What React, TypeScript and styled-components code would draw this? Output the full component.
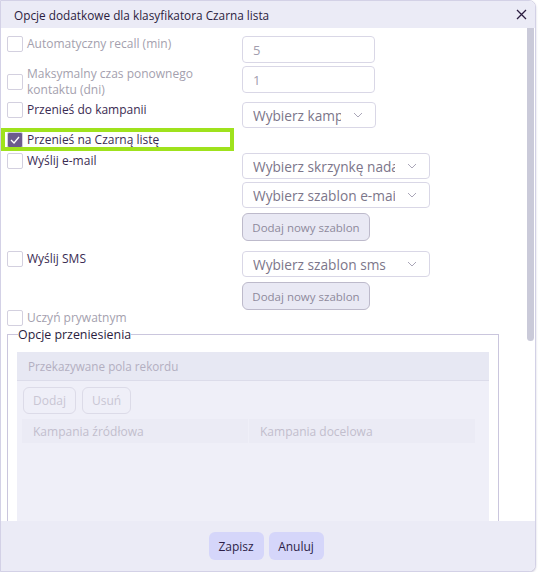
import styled, { createGlobalStyle } from "styled-components";

const GlobalStyle = createGlobalStyle`
  html, body {
    margin: 0;
    padding: 0;
    background: #ffffff;
  }
  body {
    font-family: "Open Sans", "DejaVu Sans", sans-serif;
  }
  * {
    box-sizing: border-box;
  }
`;

const DialogDIV = styled.div`
  width: 536px;
  height: 572px;
  display: flex;
  flex-direction: column;
  background: #ffffff;
  border: 1px solid #d3d1e6;
  border-radius: 0 7px 7px 0;
  overflow: hidden;
  box-shadow: 0 1px 2px rgba(60, 50, 110, 0.25);
`;

const HeaderDIV = styled.div`
  height: 27px;
  flex: none;
  display: flex;
  align-items: center;
  justify-content: space-between;
  padding: 0 7px 0 13px;
  background: #ebebf6;
  color: #2b1d40;
  font-size: 11.8px;
`;

const CloseBTN = styled.button`
  border: 0;
  background: transparent;
  padding: 0;
  width: 14px;
  height: 14px;
  display: flex;
  align-items: center;
  justify-content: center;
  cursor: pointer;
`;

const BodyWrapDIV = styled.div`
  flex: 1;
  min-height: 0;
  display: flex;
`;

const BodyDIV = styled.div`
  flex: 1;
  overflow: hidden;
  padding: 8px 0 0 6px;
`;

const ScrollTrackDIV = styled.div`
  width: 8px;
  flex: none;
  background: #ffffff;
`;

const ScrollThumbDIV = styled.div`
  width: 7px;
  height: 313px;
  background: #cacad9;
  border-radius: 0 0 4px 4px;
`;

const RowDIV = styled.div<{ $top: number }>`
  display: grid;
  grid-template-columns: 227px auto;
  column-gap: 8px;
  align-items: start;
  margin-top: ${(p) => p.$top}px;
`;

const LabelLABEL = styled.label<{ $highlight?: boolean; $center?: boolean }>`
  display: flex;
  align-items: ${(p) => (p.$center ? "center" : "flex-start")};
  gap: 4px;
  ${(p) =>
    p.$highlight &&
    `
    height: 15px;
    align-items: center;
    outline: 4px solid #9fe21d;
    margin-left: -2px;
    padding-left: 2px;
    width: 225px;
  `}
`;

const BoxSPAN = styled.span<{ $checked?: boolean }>`
  flex: none;
  width: 16px;
  height: 16px;
  border: 1px solid #d3d0df;
  border-radius: 2px;
  background: ${(p) => (p.$checked ? "#6c5b8d" : "#ffffff")};
  display: flex;
  align-items: center;
  justify-content: center;
`;

const LabelTextSPAN = styled.span<{ $disabled?: boolean }>`
  font-size: 12px;
  line-height: 16px;
  color: ${(p) => (p.$disabled ? "#a49fae" : "#3a2b52")};
`;

const ControlsDIV = styled.div`
  display: flex;
  flex-direction: column;
  align-items: flex-start;
  gap: 3px;
`;

const InputBOX = styled.div<{ $w: number }>`
  width: ${(p) => p.$w}px;
  height: 27px;
  border: 1px solid #d9d7e6;
  border-radius: 4px;
  padding: 0 10px;
  display: flex;
  align-items: center;
  font-size: 13px;
  color: #a29dae;
`;

const SelectBOX = styled.div<{ $w: number }>`
  width: ${(p) => p.$w}px;
  height: 26px;
  border: 1px solid #d9d7e6;
  border-radius: 4px;
  padding: 0 12px 0 10px;
  display: flex;
  align-items: center;
  justify-content: space-between;
  gap: 12px;
  font-size: 13.7px;
  color: #7c768a;
`;

const SelectTextSPAN = styled.span`
  overflow: hidden;
  white-space: nowrap;
  flex: 1;
`;

const GhostBTN = styled.button`
  width: 128px;
  height: 28px;
  padding: 0;
  margin-top: 2px;
  border: 1px solid #bdbacb;
  border-radius: 6px;
  background: #e9e9f4;
  font-family: inherit;
  font-size: 11.5px;
  color: #8e899c;
`;

const FieldsetFS = styled.fieldset`
  margin: 0;
  width: 492px;
  border: 1px solid #cac6dd;
  padding: 9px 9px 0 9px;
  min-width: 0;

  legend {
    padding: 0;
    margin-left: 1px;
    font-size: 12.4px;
    line-height: 17px;
    color: #2b1d40;
  }
`;

const PanelDIV = styled.div`
  background: #efeff8;
  height: 420px;
`;

const PanelHeaderDIV = styled.div`
  height: 29px;
  display: flex;
  align-items: center;
  padding-left: 11px;
  background: #e7e8f3;
  border-bottom: 1px solid #dcdcea;
  font-size: 11.7px;
  color: #b3afc1;
`;

const ToolbarDIV = styled.div`
  display: flex;
  gap: 6px;
  padding: 6px 6px 5px 6px;
`;

const DisabledBTN = styled.button`
  height: 27px;
  padding: 0 9px;
  border: 1px solid #dcdbe8;
  border-radius: 6px;
  background: transparent;
  font-family: inherit;
  font-size: 12px;
  color: #c9c6d4;
`;

const TableHeadDIV = styled.div`
  display: grid;
  grid-template-columns: 226px 226px;
  gap: 1px;
  padding: 0 5px;
`;

const HeadCellDIV = styled.div`
  height: 24px;
  display: flex;
  align-items: center;
  padding-left: 11px;
  background: #ebebf5;
  font-size: 12px;
  color: #c2becd;
`;

const FooterDIV = styled.div`
  height: 50px;
  flex: none;
  display: flex;
  align-items: center;
  justify-content: center;
  gap: 5px;
  padding-right: 4px;
  background: #ebebf6;
`;

const FooterBTN = styled.button`
  width: 55px;
  height: 28px;
  padding: 0;
  border: 0;
  border-radius: 6px;
  background: #d5d6fa;
  font-family: inherit;
  font-size: 12px;
  color: #2d1e48;
`;

const Chevron = () => (
  <svg width="10" height="6" viewBox="0 0 10 6" fill="none">
    <path d="M1 1l4 4 4-4" stroke="#aaa6b8" strokeWidth="1" />
  </svg>
);

const Check = ({
  checked,
  disabled,
  children,
  highlight,
  center,
}: {
  checked?: boolean;
  disabled?: boolean;
  children: React.ReactNode;
  highlight?: boolean;
  center?: boolean;
}) => (
  <LabelLABEL $highlight={highlight} $center={center}>
    <BoxSPAN $checked={checked}>
      {checked && (
        <svg width="10" height="8" viewBox="0 0 10 8" fill="none">
          <path d="M1 4l3 3 5-6" stroke="#ffffff" strokeWidth="1.3" />
        </svg>
      )}
    </BoxSPAN>
    <LabelTextSPAN $disabled={disabled}>{children}</LabelTextSPAN>
  </LabelLABEL>
);

const App = () => {
  return (
    <>
      <GlobalStyle />
      <DialogDIV>
        <HeaderDIV>
          <span>Opcje dodatkowe dla klasyfikatora Czarna lista</span>
          <CloseBTN aria-label="Zamknij">
            <svg width="11" height="11" viewBox="0 0 11 11" fill="none">
              <path d="M1 1l9 9M10 1L1 10" stroke="#2b1d40" strokeWidth="1.3" />
            </svg>
          </CloseBTN>
        </HeaderDIV>

        <BodyWrapDIV>
          <BodyDIV>
            <RowDIV $top={0}>
              <Check disabled center>
                Automatyczny recall (min)
              </Check>
              <ControlsDIV>
                <InputBOX $w={133}>5</InputBOX>
              </ControlsDIV>
            </RowDIV>

            <RowDIV $top={3}>
              <Check disabled center>
                Maksymalny czas ponownego
                <br />
                kontaktu (dni)
              </Check>
              <ControlsDIV>
                <InputBOX $w={133}>1</InputBOX>
              </ControlsDIV>
            </RowDIV>

            <RowDIV $top={4}>
              <Check>Przenieś do kampanii</Check>
              <ControlsDIV>
                <SelectBOX $w={134}>
                  <SelectTextSPAN>Wybierz kampanię</SelectTextSPAN>
                  <Chevron />
                </SelectBOX>
              </ControlsDIV>
            </RowDIV>

            <RowDIV $top={4}>
              <Check checked highlight>
                Przenieś na Czarną listę
              </Check>
            </RowDIV>

            <RowDIV $top={6}>
              <Check>Wyślij e-mail</Check>
              <ControlsDIV>
                <SelectBOX $w={188}>
                  <SelectTextSPAN>Wybierz skrzynkę nadawczą</SelectTextSPAN>
                  <Chevron />
                </SelectBOX>
                <SelectBOX $w={188}>
                  <SelectTextSPAN>Wybierz szablon e-mail</SelectTextSPAN>
                  <Chevron />
                </SelectBOX>
                <GhostBTN>Dodaj nowy szablon</GhostBTN>
              </ControlsDIV>
            </RowDIV>

            <RowDIV $top={10}>
              <Check>Wyślij SMS</Check>
              <ControlsDIV>
                <SelectBOX $w={188}>
                  <SelectTextSPAN>Wybierz szablon sms</SelectTextSPAN>
                  <Chevron />
                </SelectBOX>
                <GhostBTN>Dodaj nowy szablon</GhostBTN>
              </ControlsDIV>
            </RowDIV>

            <RowDIV $top={0}>
              <Check disabled>Uczyń prywatnym</Check>
            </RowDIV>

            <FieldsetFS>
              <legend>Opcje przeniesienia</legend>
              <PanelDIV>
                <PanelHeaderDIV>Przekazywane pola rekordu</PanelHeaderDIV>
                <ToolbarDIV>
                  <DisabledBTN disabled>Dodaj</DisabledBTN>
                  <DisabledBTN disabled>Usuń</DisabledBTN>
                </ToolbarDIV>
                <TableHeadDIV>
                  <HeadCellDIV>Kampania źródłowa</HeadCellDIV>
                  <HeadCellDIV>Kampania docelowa</HeadCellDIV>
                </TableHeadDIV>
              </PanelDIV>
            </FieldsetFS>
          </BodyDIV>
          <ScrollTrackDIV>
            <ScrollThumbDIV />
          </ScrollTrackDIV>
        </BodyWrapDIV>

        <FooterDIV>
          <FooterBTN>Zapisz</FooterBTN>
          <FooterBTN>Anuluj</FooterBTN>
        </FooterDIV>
      </DialogDIV>
    </>
  );
};

export default App;
